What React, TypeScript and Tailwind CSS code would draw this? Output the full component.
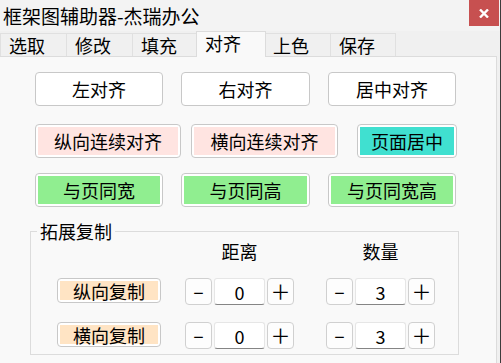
import React from 'react';

const tabs = ['选取', '修改', '填充', '对齐', '上色', '保存'];

function PlainButton({ label, width }: { label: string; width: string }) {
  return (
    <button
      className={`${width} h-[34px] bg-white border border-[#c8c8c8] rounded-[4px] text-[18px] leading-none text-black`}
    >
      {label}
    </button>
  );
}

function FillButton({
  label,
  width,
  fill,
  height = 'h-[34px]',
}: {
  label: string;
  width: string;
  fill: string;
  height?: string;
}) {
  return (
    <button
      className={`${width} ${height} bg-white border border-[#c8c8c8] rounded-[4px] p-[2px] text-[18px] leading-none text-black`}
    >
      <div className={`w-full h-full ${fill} flex items-center justify-center`}>
        {label}
      </div>
    </button>
  );
}

function Stepper({ value }: { value: number }) {
  return (
    <div className="flex gap-[2px] w-[109px]">
      <button className="w-[27px] h-[27px] bg-[#fdfdfd] border border-[#d0d0d0] rounded-[4px] flex items-center justify-center text-[18px] leading-none">
        −
      </button>
      <div className="w-[51px] h-[27px] bg-white border border-[#e6e6e6] border-b-[#858585] rounded-[3px] flex items-center justify-center text-[18px] leading-none">
        {value}
      </div>
      <button className="w-[27px] h-[27px] bg-[#fdfdfd] border border-[#d0d0d0] rounded-[4px] flex items-center justify-center text-[20px] leading-none">
        ＋
      </button>
    </div>
  );
}

export default function App() {
  return (
    <div className="w-[501px] h-[363px] overflow-hidden flex flex-col bg-[#f0f0f0] border-r border-[#3c3c3c] text-black font-['Noto_Sans_CJK_SC','Microsoft_YaHei',sans-serif]">
      {/* --- title bar --- */}
      <div className="h-[31px] flex items-start bg-[#f3f3f3]">
        <div className="pl-[3px] h-[30px] flex items-center text-[19px] leading-none">
          框架图辅助器-杰瑞办公
        </div>
        <button className="ml-auto mr-[1px] w-[30px] h-[26px] bg-[#c75050] flex items-center justify-center">
          <svg width="10" height="9" viewBox="0 0 10 9">
            <path d="M1 0.5 L9 8.5 M9 0.5 L1 8.5" stroke="white" strokeWidth="2.4" />
          </svg>
        </button>
      </div>

      {/* --- tabs --- */}
      <div className="h-[25px] flex items-start">
        {tabs.map((t) =>
          t === '对齐' ? (
            <div
              key={t}
              className="relative z-10 -mx-[2px] w-[70px] h-[26px] bg-[#f9f9f9] border border-b-0 border-[#dcdcdc] pl-[8px] pb-[4px] flex items-center text-[18px] leading-none"
            >
              {t}
            </div>
          ) : (
            <div
              key={t}
              className={`mt-[2px] w-[66px] h-[23px] border-t border-l border-[#e0e0e0] ${
                t === '保存' ? 'border-r' : ''
              } pl-[8px] flex items-center text-[18px] leading-none`}
            >
              {t}
            </div>
          )
        )}
      </div>

      {/* --- panel --- */}
      <div className="flex-1 mr-[3px] bg-[#f9f9f9] border-t border-r border-[#dcdcdc]">
        <div className="mt-[15px] pl-[35px] flex gap-[18px]">
          <PlainButton label="左对齐" width="w-[128px]" />
          <PlainButton label="右对齐" width="w-[129px]" />
          <PlainButton label="居中对齐" width="w-[128px]" />
        </div>

        <div className="mt-[18px] pl-[35px] flex">
          <FillButton label="纵向连续对齐" width="w-[146px]" fill="bg-[#ffe4e1]" />
          <div className="ml-[10px]">
            <FillButton label="横向连续对齐" width="w-[147px]" fill="bg-[#ffe4e1]" />
          </div>
          <div className="ml-[19px]">
            <FillButton label="页面居中" width="w-[100px]" fill="bg-[#40e0d0]" />
          </div>
        </div>

        <div className="mt-[15px] pl-[35px] flex gap-[18px]">
          <FillButton label="与页同宽" width="w-[128px]" fill="bg-[#90ee90]" />
          <FillButton label="与页同高" width="w-[129px]" fill="bg-[#90ee90]" />
          <FillButton label="与页同宽高" width="w-[128px]" fill="bg-[#90ee90]" />
        </div>

        {/* --- 拓展复制 --- */}
        <fieldset className="mt-[14px] ml-[30px] w-[429px] border border-[#dcdcdc] pb-[5px]">
          <legend className="ml-[6px] px-[3px] text-[18px] leading-[20px]">拓展复制</legend>

          <div className="pl-[26px] flex text-[18px] leading-[20px]">
            <div className="w-[104px]" />
            <div className="ml-[24px] w-[109px] text-center">距离</div>
            <div className="ml-[32px] w-[109px] text-center">数量</div>
          </div>

          {['纵向复制', '横向复制'].map((label) => (
            <div key={label} className="mt-[17px] pl-[26px] flex items-start">
              <FillButton label={label} width="w-[104px]" height="h-[25px]" fill="bg-[#ffe4c4]" />
              <div className="ml-[24px]">
                <Stepper value={0} />
              </div>
              <div className="ml-[32px]">
                <Stepper value={3} />
              </div>
            </div>
          ))}
        </fieldset>
      </div>
    </div>
  );
}
